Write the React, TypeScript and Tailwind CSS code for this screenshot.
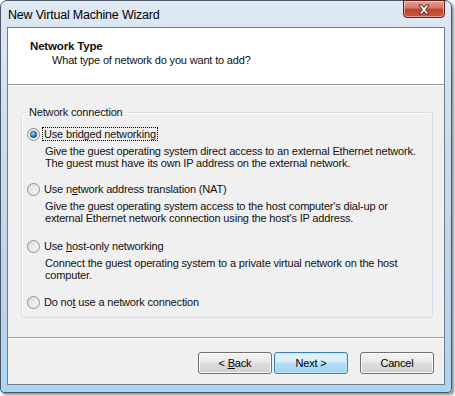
import React from "react";

const font = { fontFamily: '"Liberation Sans", Arial, sans-serif' };

function Radio({ checked }: { checked?: boolean }) {
  return (
    <svg width="13" height="13" viewBox="0 0 13 13" className="shrink-0">
      <defs>
        <linearGradient id="rbg" x1="0" y1="0" x2="1" y2="1">
          <stop offset="0" stopColor="#d9d9d9" />
          <stop offset="1" stopColor="#fbfbfb" />
        </linearGradient>
        <radialGradient id="rdot" cx="0.4" cy="0.35" r="0.7">
          <stop offset="0" stopColor="#a9ddfa" />
          <stop offset="0.5" stopColor="#2f8fd0" />
          <stop offset="1" stopColor="#0d4f86" />
        </radialGradient>
      </defs>
      <circle cx="6.5" cy="6.5" r="6" fill="url(#rbg)" stroke="#8f8f8f" strokeWidth="1" />
      <circle cx="6.5" cy="6.5" r="4.4" fill="none" stroke="#e6e6e6" strokeWidth="0.8" />
      {checked && <circle cx="6.5" cy="6.5" r="3.2" fill="url(#rdot)" stroke="#1a4c74" strokeWidth="0.6" />}
    </svg>
  );
}

function Option({
  label,
  lines,
  checked,
  focus,
  className,
}: {
  label: React.ReactNode;
  lines?: string[];
  checked?: boolean;
  focus?: boolean;
  className?: string;
}) {
  return (
    <div className={className}>
      <div className="flex items-center h-[14px] pl-[5px]">
        <Radio checked={checked} />
        <span
          className={
            "ml-[2px] px-[1px] leading-[12px] " +
            (focus ? "border border-dotted border-black" : "border border-transparent")
          }
        >
          {label}
        </span>
      </div>
      {lines && (
        <div className="mt-[4px] pl-[23px] leading-[12px]">
          {lines.map((l) => (
            <div key={l}>{l}</div>
          ))}
        </div>
      )}
    </div>
  );
}

function Button({ children, primary, className }: { children: React.ReactNode; primary?: boolean; className?: string }) {
  return (
    <div
      className={
        "w-[74px] h-[22px] rounded-[3px] border flex items-center justify-center text-black " +
        (primary
          ? "border-[#3c7fb1] bg-[linear-gradient(#e5f4fc_0%,#d5edfa_45%,#b3dff7_50%,#9fd3f1_100%)] shadow-[inset_0_0_0_1px_#c4e6f9]"
          : "border-[#707070] bg-[linear-gradient(#f2f2f2_0%,#ebebeb_45%,#dddddd_50%,#cfcfcf_100%)] shadow-[inset_0_0_0_1px_#fbfbfb]") +
        " " +
        (className ?? "")
      }
    >
      {children}
    </div>
  );
}

export default function App() {
  return (
    <div className="w-[455px] h-[396px] bg-white overflow-hidden text-[11px] tracking-[-0.17px] text-[#111]" style={font}>
      <div className="w-[452px] h-[393px] rounded-t-[7px] rounded-b-[4px] border border-[#4b5866] bg-[linear-gradient(180deg,#dfe9f4_0%,#c9dbee_40%,#bcd3ea_80%,#a9d6f3_100%)] shadow-[2px_2px_3px_rgba(0,0,0,0.45)] flex flex-col px-[6px] pb-[7px]">
        {/* title bar */}
        <div className="h-[26px] flex items-start relative shrink-0">
          <span className="mt-[7px] ml-[1px] text-[12.5px] tracking-[-0.2px] leading-[14px] text-black">New Virtual Machine Wizard</span>
          <div className="ml-auto mr-[0px] -mt-px w-[42px] h-[18px] rounded-b-[4px] border border-[#5a2420] bg-[linear-gradient(#e8a295_0%,#d27563_45%,#c2402b_50%,#c95a3e_100%)] shadow-[inset_0_0_0_1px_rgba(255,220,210,0.55)] flex items-center justify-center">
            <svg width="14" height="11" viewBox="0 0 14 11">
              <path
                d="M2 1 L5 1 L7 3.5 L9 1 L12 1 L8.6 5.5 L12 10 L9 10 L7 7.5 L5 10 L2 10 L5.4 5.5 Z"
                fill="#ffffff"
                stroke="#3d2622"
                strokeWidth="0.9"
                strokeLinejoin="round"
              />
            </svg>
          </div>
        </div>
        {/* client */}
        <div className="flex-1 border border-[#6d7b8b] bg-[#f0f0f0] flex flex-col">
          <div className="h-[56px] bg-white shrink-0 pl-[22px] pt-[11px]">
            <div className="font-bold text-[11.5px] leading-[14px]">Network Type</div>
            <div className="pl-[22px] leading-[14px] mt-[0px]">What type of network do you want to add?</div>
          </div>
          <div className="h-px bg-[#a0a0a0] shrink-0" />
          <div className="h-px bg-white shrink-0" />
          <div className="flex-1 flex flex-col pt-[19px]">
            <fieldset className="ml-[13px] mr-[11px] h-[213px] border border-[#d5dfe5] rounded-[3px] shadow-[inset_1px_1px_0_#ffffff]">
              <legend className="ml-[4px] px-[3px] leading-[14px]">Network connection</legend>
              <Option
                className="mt-[8px]"
                checked
                focus
                label="Use bridged networking"
                lines={[
                  "Give the guest operating system direct access to an external Ethernet network.",
                  "The guest must have its own IP address on the external network.",
                ]}
              />
              <Option
                className="mt-[13px]"
                label={
                  <>
                    Use n<u>e</u>twork address translation (NAT)
                  </>
                }
                lines={[
                  "Give the guest operating system access to the host computer's dial-up or",
                  "external Ethernet network connection using the host's IP address.",
                ]}
              />
              <Option
                className="mt-[15px]"
                label={
                  <>
                    Use <u>h</u>ost-only networking
                  </>
                }
                lines={["Connect the guest operating system to a private virtual network on the host", "computer."]}
              />
              <Option
                className="mt-[14px]"
                label={
                  <>
                    Do no<u>t</u> use a network connection
                  </>
                }
              />
            </fieldset>
            <div className="mt-[19px] h-px bg-[#a0a0a0] shrink-0" />
            <div className="h-px bg-white shrink-0" />
            <div className="mt-[13px] flex justify-end pr-[10px]">
              <Button>
                {"<\u00a0"}
                <u>B</u>ack
              </Button>
              <Button primary className="ml-[2px]">
                Next &gt;
              </Button>
              <Button className="ml-[12px]">Cancel</Button>
            </div>
          </div>
        </div>
      </div>
    </div>
  );
}
